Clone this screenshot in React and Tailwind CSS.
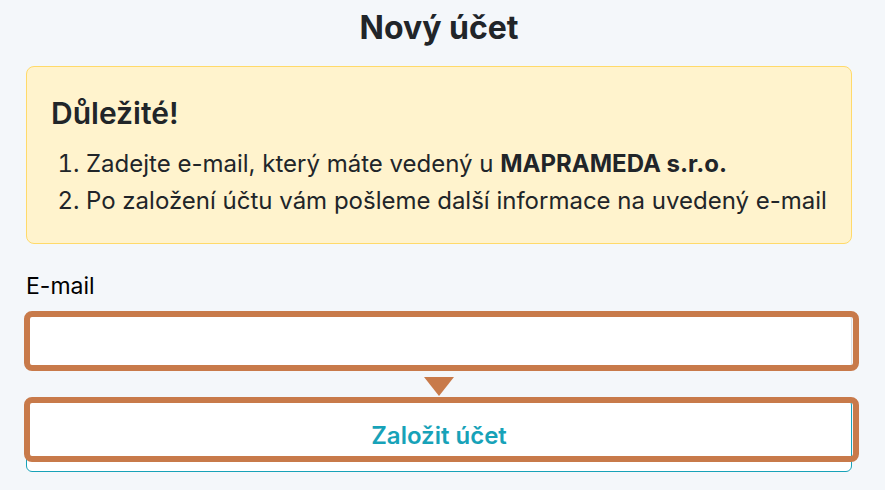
import React from 'react';

const App = () => {
  return (
    <div className="min-h-[490px] bg-[#f4f7fa] pl-[26px] pr-[33px] text-[#212529]" style={{ fontFamily: 'Inter, "Noto Sans", sans-serif' }}>
      <h1 className="pt-[8px] text-center text-[32px] font-bold leading-[40px]">Nový účet</h1>

      <div className="mt-[18px] rounded-[8px] border border-[#ffda6a] bg-[#fff3cd] px-[24px] pt-[26px] pb-[24px]">
        <h2 className="text-[30px] font-semibold leading-[40px]">Důležité!</h2>
        <ol className="mt-[12px] list-decimal whitespace-nowrap pl-[35px] text-[24px] leading-[37px]">
          <li>Zadejte e-mail, který máte vedený u <b>MAPRAMEDA s.r.o.</b></li>
          <li>Po založení účtu vám pošleme další informace na uvedený e-mail</li>
        </ol>
      </div>

      <label className="mt-[27px] block text-[23px] leading-[30px] text-black">E-mail</label>

      <div className="relative mt-[13px]">
        <input type="email" className="block h-[55px] w-full rounded-[6px] border border-[#dee2e6] bg-white px-3 text-[20px] outline-none" />
        <div className="pointer-events-none absolute left-[-2px] right-[-7px] top-[-3px] bottom-[-2px] rounded-[8px] border-[6px] border-[#c87a4a]"></div>
      </div>

      <div className="flex justify-center pt-[8px]">
        <svg width="30" height="19" viewBox="0 0 30 19">
          <path d="M0 0 L30 0 L15 19 Z" fill="#c87a4a" />
        </svg>
      </div>

      <div className="relative mt-[3px]">
        <button className="block h-[73px] w-full rounded-[6px] border border-[#17a2b8] bg-white text-[24px] font-semibold text-[#17a2b8]">
          Založit účet
        </button>
        <div className="pointer-events-none absolute left-[-2px] right-[-7px] top-[-2px] h-[65px] rounded-[8px] border-[6px] border-[#c87a4a]"></div>
      </div>
    </div>
  );
};

export default App;
